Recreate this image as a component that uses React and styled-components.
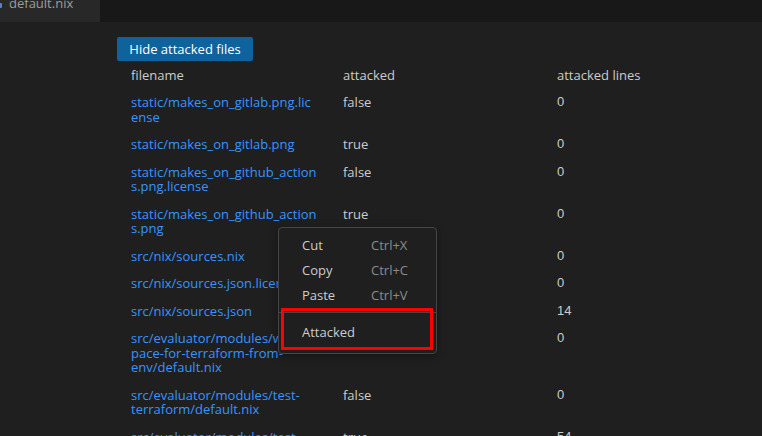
import React from 'react';
import styled, { createGlobalStyle } from 'styled-components';

const GlobalStyle = createGlobalStyle`
  html, body {
    margin: 0;
    padding: 0;
    background: #1f1f1f;
    overflow: hidden;
  }
  body {
    font-family: "Open Sans", "Noto Sans", sans-serif;
    font-size: 13px;
    color: #cccccc;
  }
`;

const Page = styled.div`
  width: 762px;
  height: 436px;
  display: flex;
  flex-flow: column nowrap;
  overflow: hidden;
  background: #1f1f1f;
`;

const TabBar = styled.div`
  height: 22px;
  min-height: 22px;
  display: flex;
  background: #181818;
`;

const Tab = styled.div`
  width: 100px;
  display: flex;
  align-items: flex-start;
  background: #282828;
  box-sizing: border-box;
  padding-left: 9px;
  position: relative;
  overflow: hidden;
`;

const TabIcon = styled.span`
  position: absolute;
  left: -3px;
  top: 3px;
  width: 5px;
  height: 5px;
  border-radius: 1px;
  background: #5a7fc6;
`;

const TabLabel = styled.span`
  font-size: 13px;
  line-height: 13px;
  margin-top: -3px;
  color: #9d9d9d;
`;

const Content = styled.div`
  flex: 1;
  padding: 15px 0 0 117px;
  position: relative;
`;

const Button = styled.button`
  height: 24px;
  width: 136px;
  padding: 0;
  border: 0;
  border-radius: 2px;
  background: #0e639c;
  color: #ffffff;
  font-family: inherit;
  font-size: 13px;
  display: flex;
  align-items: center;
  justify-content: center;
  cursor: pointer;
`;

const Table = styled.div`
  display: grid;
  grid-template-columns: 212px 214px 1fr;
`;

const Cell = styled.div`
  padding: 6.5px 12px 6.5px 14px;
  line-height: 14.5px;
  overflow-wrap: anywhere;
  color: ${props => props.link ? '#3794ff' : '#cccccc'};
  font-family: ${props => props.num ? '"Liberation Sans", Arial, sans-serif' : 'inherit'};
`;

const Menu = styled.div`
  position: absolute;
  left: 278px;
  top: 205px;
  width: 159px;
  box-sizing: border-box;
  padding: 4px 0 9px;
  background: #1f1f1f;
  border: 1px solid #454545;
  border-radius: 4px;
  box-shadow: 0 2px 8px rgba(0, 0, 0, 0.36);
`;

const MenuItem = styled.div`
  height: 25px;
  display: flex;
  align-items: center;
  padding-left: 23px;
  color: #cccccc;
  font-size: 13px;
`;

const ItemLabel = styled.span`
  width: 69px;
`;

const Shortcut = styled.span`
  color: #8b8b8b;
`;

const Separator = styled.div`
  height: 1px;
  margin: 5px 0 6px;
  background: #454545;
`;

const Highlight = styled.div`
  position: absolute;
  left: 2px;
  top: 80px;
  width: 152px;
  height: 42px;
  box-sizing: border-box;
  border: 3px solid #ff0000;
`;

const rows = [
  ['static/makes_on_gitlab.png.license', 'false', '0'],
  ['static/makes_on_gitlab.png', 'true', '0'],
  ['static/makes_on_github_actions.png.license', 'false', '0'],
  ['static/makes_on_github_actions.png', 'true', '0'],
  ['src/nix/sources.nix', 'false', '0'],
  ['src/nix/sources.json.license', 'false', '0'],
  ['src/nix/sources.json', 'true', '14'],
  ['src/evaluator/modules/workspace-for-terraform-from-env/default.nix', 'false', '0'],
  ['src/evaluator/modules/test-terraform/default.nix', 'false', '0'],
  ['src/evaluator/modules/test-lint/default.nix', 'true', '54'],
];

export default function App() {
  return (
    <Page>
      <GlobalStyle />
      <TabBar>
        <Tab>
          <TabIcon />
          <TabLabel>default.nix</TabLabel>
        </Tab>
      </TabBar>
      <Content>
        <Button>Hide attacked files</Button>
        <Table>
          <Cell>filename</Cell>
          <Cell>attacked</Cell>
          <Cell>attacked lines</Cell>
          {rows.map(([name, attacked, lines]) => (
            <React.Fragment key={name}>
              <Cell link>{name}</Cell>
              <Cell>{attacked}</Cell>
              <Cell num>{lines}</Cell>
            </React.Fragment>
          ))}
        </Table>
        <Menu>
          <MenuItem><ItemLabel>Cut</ItemLabel><Shortcut>Ctrl+X</Shortcut></MenuItem>
          <MenuItem><ItemLabel>Copy</ItemLabel><Shortcut>Ctrl+C</Shortcut></MenuItem>
          <MenuItem><ItemLabel>Paste</ItemLabel><Shortcut>Ctrl+V</Shortcut></MenuItem>
          <Separator />
          <MenuItem>Attacked</MenuItem>
          <Highlight />
        </Menu>
      </Content>
    </Page>
  );
}
